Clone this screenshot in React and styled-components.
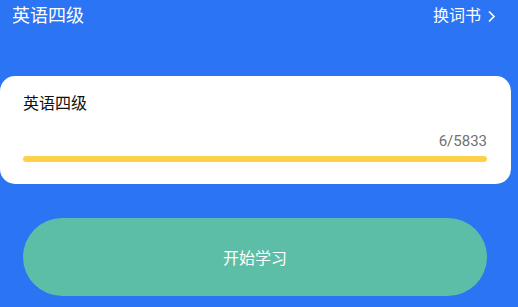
import React from "react";
import styled, { createGlobalStyle } from "styled-components";

const GlobalStyle = createGlobalStyle`
  html, body {
    margin: 0;
    padding: 0;
    background: #2b74f3;
  }
  body {
    font-family: Roboto, "Noto Sans CJK SC", sans-serif;
  }
`;

const Page = styled.div`
  width: 518px;
  height: 307px;
  background: #2b74f3;
  display: flex;
  flex-direction: column;
  overflow: hidden;
`;

const Header = styled.div`
  height: 32px;
  display: flex;
  align-items: center;
  justify-content: space-between;
  padding: 0 22px 0 12px;
  color: #ffffff;
`;

const Title = styled.div`
  font-size: 18px;
  line-height: 32px;
`;

const Switch = styled.div`
  font-size: 16px;
  line-height: 30px;
  display: flex;
  align-items: center;
  gap: 6px;
`;

const Card = styled.div`
  margin-top: 44px;
  width: 511px;
  box-sizing: border-box;
  padding: 17px 24px 22px 23px;
  background: #ffffff;
  border-radius: 15px;
  display: flex;
  flex-direction: column;
`;

const CardTitle = styled.div`
  font-size: 16px;
  line-height: 22px;
  color: #111111;
`;

const Count = styled.div`
  margin-top: 16px;
  font-size: 15px;
  line-height: 20px;
  color: #707070;
  text-align: right;
`;

const Track = styled.div`
  margin-top: 5px;
  height: 6px;
  border-radius: 3px;
  background: #fdd24a;
`;

const StartButton = styled.button`
  margin: 34px 0 0 23px;
  width: 464px;
  height: 78px;
  border: none;
  border-radius: 39px;
  background: #5cbea6;
  color: #ffffff;
  font-family: Roboto, "Noto Sans CJK SC", sans-serif;
  font-size: 16px;
  cursor: pointer;
`;

export default function App() {
  return (
    <>
      <GlobalStyle />
      <Page>
        <Header>
          <Title>英语四级</Title>
          <Switch>
            换词书
            <svg width="9" height="13" viewBox="0 0 9 13" fill="none">
              <path d="M2 1.5L7 6.5L2 11.5" stroke="#fff" strokeWidth="1.6" />
            </svg>
          </Switch>
        </Header>
        <Card>
          <CardTitle>英语四级</CardTitle>
          <Count>6/5833</Count>
          <Track />
        </Card>
        <StartButton>开始学习</StartButton>
      </Page>
    </>
  );
}
